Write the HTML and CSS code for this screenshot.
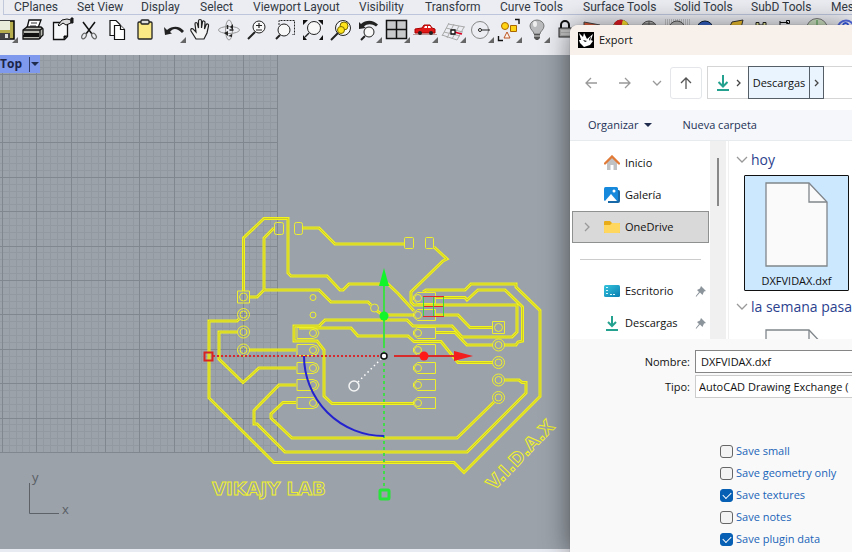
FILE: index.html
```html
<!DOCTYPE html>
<html lang="es">
<head>
<meta charset="utf-8">
<title>Export</title>
<link rel="stylesheet" href="styles.css">
</head>
<body>
<main class="app">
<nav class="tabs" aria-label="Toolbars">
<a href="#">CPlanes</a><a href="#">Set View</a><a href="#">Display</a><a href="#">Select</a><a href="#">Viewport Layout</a><a href="#">Visibility</a><a href="#">Transform</a><a href="#">Curve Tools</a><a href="#">Surface Tools</a><a href="#">Solid Tools</a><a href="#">SubD Tools</a><a href="#">Mesh Tools</a>
</nav>
<div class="tools" role="toolbar" aria-label="Standard">
<button aria-label="Save"><svg viewBox="0 0 28 28"><path d="M3 5h20v18H3z" fill="#b5ad4e" stroke="#000" stroke-width="1.5"/><path d="M6 5h13v9H6z" fill="#e8ecda"/><path d="M6 17h13v6H6z" fill="#444"/><path d="M14 18h3v4h-3z" fill="#ddd"/><path class="more" d="M27 21v6h-6z"/></svg></button>
<button aria-label="Print"><svg viewBox="0 0 28 28" stroke="#111" stroke-width="1.3"><path d="M8 12l2-8h12l-3 8z" fill="#fff"/><path d="M12 7h6m-7 3h6" stroke="#777"/><path d="M4 14l4-3h14l2 2v6l-4 4H4z" fill="#b9bbb3"/><path d="M4 14h17l3-2M21 14v9" fill="none"/><path d="M5 18h15M4 20h16" stroke-width="2"/></svg></button>
<button aria-label="Properties"><svg viewBox="0 0 28 28" stroke="#111"><path d="M6.500 6.500h14v14l-3 3h-11z" fill="#f7f8fa" stroke-width="1.300"/><path d="M20 20h-3v3"/><path d="M11 9l4-5 5-1 4 1v3l-5 2-3-2-4 3z" fill="#ddd"/><path d="M24 2h2v5h-2z" fill="#222"/></svg></button>
<button aria-label="Cut"><svg viewBox="0 0 28 28" fill="none" stroke="#111" stroke-width="1.500"><path d="M8 6l9 12M20 6l-9 12"/><g stroke="#666" stroke-width="1.200"><ellipse cx="9" cy="20" rx="2" ry="3" transform="rotate(35 9 20)"/><ellipse cx="19" cy="20" rx="2" ry="3" transform="rotate(-35 19 20)"/></g></svg></button>
<button aria-label="Copy"><svg viewBox="0 0 28 28" fill="#fff" stroke="#111" stroke-width="1.200"><path d="M7 4.500h6l4 4v11H7z"/><path d="M11.500 9.500h6l4 4v10h-10z"/><path d="M17.500 9.500v4h4"/></svg></button>
<button aria-label="Paste"><svg viewBox="0 0 28 28" stroke="#222" stroke-width="1.300"><rect x="7" y="6" width="14" height="17" rx="1" fill="#fbe985"/><rect x="10" y="4" width="8" height="4" rx="1" fill="#ddd"/></svg></button>
<button aria-label="Undo"><svg viewBox="0 0 28 28"><path d="M5 11l1 8 7-1.500-2-1.500c3-4 7-4 12 1l2-2c-4-5-11-6-17-1z" fill="#222"/><path class="more" d="M27 21v6h-6z"/></svg></button>
<button aria-label="Pan"><svg viewBox="0 0 28 28"><path d="M9 23l-5-8c-1-3 2-3 3-1l2 2-1-8c0-2 2-2 2.500 0l1 4V5c0-2 3-2 3 0v7l1-6c0-2 3-1 2.500 1l-.5 6 1.500-4c1-2 3-1 2.500 1l-1.500 7-3 6z" fill="#f4f4f5" stroke="#222" stroke-width="1.200"/></svg></button>
<button aria-label="Rotate view"><svg viewBox="0 0 28 28" fill="none" stroke="#999"><ellipse cx="14" cy="14" rx="10.500" ry="3.500"/><ellipse cx="14" cy="14" rx="3.500" ry="10"/><path d="M12.500 9v4m6 1h-4" stroke="#222" stroke-width="1.500"/><path d="M18 8v6l-3-3zM9 17l4-2v5zM13 20l4-2v3z" fill="#222" stroke="none"/></svg></button>
<button aria-label="Zoom"><svg viewBox="0 0 28 28" fill="none" stroke="#222"><circle cx="16" cy="11" r="6" fill="#f8f8f8"/><path d="M16 7v5m-3-2.500h6M13 14h6" stroke-width="1.200"/><path d="M12 16l-7 7" stroke-width="2"/></svg></button>
<button aria-label="Zoom window"><svg viewBox="0 0 28 28" fill="none" stroke="#222"><path d="M8 9V4.500h15.500v14H21" stroke-dasharray="2 1"/><circle cx="13" cy="14" r="6" fill="#f8f8f8"/><path d="M9 19l-4 4" stroke-width="2"/></svg></button>
<button aria-label="Zoom extents"><svg viewBox="0 0 28 28" fill="none" stroke="#222"><circle cx="15" cy="12" r="6.500" fill="#f8f8f8"/><path d="M10 17l-4 4" stroke-width="1.500"/><path d="M4 4h5l-5 5zM24 4h-5l5 5zM4 24h4l-4-5zM24 24h-4l4-5z" fill="#111" stroke="none"/></svg></button>
<button aria-label="Zoom selected"><svg viewBox="0 0 28 28" fill="none" stroke="#222"><circle cx="16" cy="12" r="7.500" fill="#f8f8f8"/><g fill="#ffe31b" stroke="#776a00"><circle cx="17" cy="10" r="4"/><circle cx="14" cy="14" r="3.500"/></g><path d="M11 17l-7 7" stroke-width="2"/></svg></button>
<button aria-label="Undo view"><svg viewBox="0 0 28 28" fill="none" stroke="#222"><path d="M4 6l0 7 7-1-2-1.500c3-3 8-3 12 0l2-2c-5-5-12-5-17-.500z" fill="#222" stroke="none"/><circle cx="14" cy="16" r="5" fill="#f8f8f8"/><path d="M10 20l-4 4" stroke-width="2"/><path class="more" stroke="none" d="M27 21v6h-6z"/></svg></button>
<button aria-label="Four viewports"><svg viewBox="0 0 28 28"><path d="M3.500 4.500h20v18h-20zM13.500 4.500v18M3.500 13.500h20" fill="#c8c9cb" stroke="#111" stroke-width="1.500"/><path class="more" d="M27 21v6h-6z"/></svg></button>
<button aria-label="Set view"><svg viewBox="0 0 28 28"><path d="M2 18.500h24" stroke="#b99"/><path d="M4 17v-4l7-1 2-3h6l2 3 3 1v4z" fill="#e01818" stroke="#a00"/><path d="M13 12l1-2h2v2zm4 0v-2h2l1 2z" fill="#fff"/><g fill="#222"><circle cx="9" cy="17" r="2"/><circle cx="20" cy="17" r="2"/></g><path class="more" d="M27 21v6h-6z"/></svg></button>
<button aria-label="Set CPlane"><svg viewBox="0 0 28 28"><path d="M9 8l17 3M7 12l17 4M5 16l16 4M3 19l15 5M10 7L3 20M15 8L8 22M20 10l-7 13M25 11l-7 13" stroke="#aaa" fill="none"/><path d="M15 16l8 2" stroke="#d02" stroke-width="1.500"/><path d="M12 14h4v4h-4z" fill="#fff" stroke="#111" stroke-width="1.300"/><path class="more" d="M27 21v6h-6z"/></svg></button>
<button aria-label="Circle"><svg viewBox="0 0 28 28" fill="none" stroke="#888"><circle cx="13" cy="14" r="8.500"/><path d="M14 14h9" stroke="#222"/><circle cx="13" cy="14" r="1.500" fill="#fff" stroke="#222"/><path class="more" stroke="none" d="M27 21v6h-6z"/></svg></button>
<button aria-label="Select"><svg viewBox="0 0 28 28" fill="none" stroke="#333"><g fill="#ffd414" stroke="#a60"><circle cx="10" cy="10" r="3.500"/><path d="M15.500 9.500h6v6h-6z"/></g><path d="M12 16l-3 6h6z" fill="#fff5ee" stroke="#b52"/><path d="M20 3.500h4V8M3.500 20v4.500H8" stroke="#111" stroke-width="1.400"/><path class="more" stroke="none" d="M27 21v6h-6z"/></svg></button>
<button aria-label="Show or hide"><svg viewBox="0 0 28 28"><path d="M11 18c0-3-4-4-4-8a7 6 0 0 1 14 0c0 4-4 5-4 8z" fill="#b9bbbd" stroke="#777"/><ellipse cx="12" cy="8" rx="2" ry="3" fill="#eee"/><path d="M11 18h6v4l-2 2h-2l-2-2z" fill="#555"/><path d="M11 20h6" stroke="#ddd"/><path class="more" d="M27 21v6h-6z"/></svg></button>
<button aria-label="Lock"><svg viewBox="0 0 28 28"><path d="M10 12V9a4 4 0 0 1 8 0v3" fill="none" stroke="#111" stroke-width="2"/><rect x="8" y="12" width="13" height="9" fill="#aaa" stroke="#222"/><path d="M10 15h9m-9 3h9" stroke="#ddd"/></svg></button>
<button aria-label="Layers"><svg viewBox="0 0 28 28"><path d="M5 6l16 3v5H5z" fill="#e05a36" stroke="#444"/></svg></button>
<button aria-label="Color"><svg viewBox="0 0 28 28"><circle cx="14" cy="12" r="8" fill="#f3ba23" stroke="#555"/><path d="M14 12L7 8a8 8 0 0 1 9-4z" fill="#e41b25"/><path d="M14 12l2-8a8 8 0 0 1 5 4z" fill="#ffe52d"/></svg></button>
<button aria-label="Render"><svg viewBox="0 0 28 28"><circle cx="14" cy="13" r="8" fill="#bbb" stroke="#555"/><path d="M8 8h12M14 5v12" stroke="#555"/></svg></button>
<button aria-label="Shade"><svg viewBox="0 0 28 28"><path d="M2 4h25M2 6h25M2 8h25" stroke="#999" stroke-dasharray="1 1"/><circle cx="14" cy="13" r="8" fill="#bbb" stroke="#555"/></svg></button>
<button aria-label="Rendered"><svg viewBox="0 0 28 28"><circle cx="14" cy="13" r="8" fill="#3261c9" stroke="#123"/></svg></button>
<button aria-label="Spotlight"><svg viewBox="0 0 28 28"><path d="M13 6l11-2-2 8H10z" fill="#f3c32d" stroke="#333"/></svg></button>
<button aria-label="Options"><svg viewBox="0 0 28 28" fill="#ee9" stroke="#222"><path d="M9 6.500h3v3H9zM16 6.500h3v3h-3zM12 9h4"/></svg></button>
<button aria-label="Dimension"><svg viewBox="0 0 28 28" fill="none" stroke="#111"><path d="M5 5v6M5 6.500h8M11.500 4.500h3v3h-3z"/></svg></button>
<button aria-label="Grasshopper"><svg viewBox="0 0 28 28"><circle cx="14" cy="13" r="10.500" fill="#cfe3c4" stroke="#777"/><path d="M14 4v6" stroke="#494"/></svg></button>
<button aria-label="Help"><svg viewBox="0 0 28 28"><circle cx="15" cy="13" r="8.500" fill="#eef" stroke="#5369df" stroke-width="2"/><path d="M12 9c1-3 5-2 5 0" fill="none" stroke="#35d" stroke-width="2"/></svg></button>
</div>
<section class="viewport" aria-label="Top viewport">
<svg class="drawing">
<defs>
<g id="pl"><path d="M297 -5.500h16l4 1.500 2 4-2 4-4 1.500h-16z"/><circle cx="313" cy="0" r="3.500"/></g>
<g id="pr"><path d="M435.500 -5.500h-18l-4 3.500v4l4 3.500h18z"/><circle cx="418" cy="0" r="3.500"/></g>
<g id="via"><circle r="6"/><circle r="3.500"/></g>
<g id="sq"><path d="M-6-6H6V6H-6z"/><circle r="4"/></g>
<path id="traces" d="M243.500 291V238L264 218.500H288V273l3 3h36l13 14h3l6-6h39l10 9.500 16 17.500M274 228l-10 10v52l-7 7h-8M264 290h55l12 12h37l3 3M377 311l6 4h31M303 228h16l16 16h69M434 247l13 12-4 2-32 31v10l3 3h103v27l-5 5h-50l-10-11h-39l-6-6h-82l-6 6h-25v15h23l7 9v46l8 7.500h81M299 328h52l7 8h50l6 5.500h27l17 21h35M436 297.500h29l2 2.500 11-10h27l17.500 17v34l-4.500 1-2 3h-12M423 292l3-2h39l6-6h45v3l24 23.500v86l-76 76-10-10H274l-65-64.500V321h28l2-2M237 332h-18v27l24 23.500 16-14.500h37M249 350h47M296 385h-17l-25 25.500V424h3l28 28h182l59-59v-10.500h-4l-3-2.500h-14M296 402.500h-13L271 414v4l21 20h165l37-36M436 315h22l12 12.500h22M436 332.500h19L467 345h25"/>
</defs>
<g transform="translate(0 -55)" fill="none">
<g id="grid" shape-rendering="crispEdges"></g>
<use href="#traces" class="trace"/><use href="#traces" class="core"/>
<g stroke="#eff02d" stroke-width="1">
<rect x="274.500" y="222.500" width="9" height="12" rx="2"/><rect x="294.500" y="222.500" width="8" height="12" rx="2"/><rect x="404.500" y="237.500" width="9" height="11" rx="1"/><rect x="425.500" y="237.500" width="8" height="11" rx="1"/>
<use href="#sq" x="243.500" y="297"/><use href="#via" x="243.500" y="314.500"/><use href="#via" x="243.500" y="332"/><use href="#via" x="243.500" y="350"/>
<circle cx="313" cy="297.500" r="3"/><circle cx="313" cy="315" r="3"/><circle cx="374.500" cy="308" r="4"/>
<use href="#pl" y="333"/><use href="#pl" y="350"/><use href="#pl" y="368"/><use href="#pl" y="385"/><use href="#pl" y="403"/>
<use href="#pr" y="298"/><use href="#pr" y="315"/><use href="#pr" y="333"/><use href="#pr" y="350"/><use href="#pr" y="368"/><use href="#pr" y="385"/><use href="#pr" y="403"/>
<use href="#sq" x="498.500" y="327.500"/><use href="#via" x="498.500" y="345"/><use href="#via" x="498.500" y="362.500"/><use href="#via" x="498.500" y="380"/><use href="#via" x="498.500" y="397.500"/>
<text class="board" x="212" y="495">VIKAJY LAB</text>
<text class="board" transform="translate(494 491) rotate(-46)">V.I.D.A.X</text>
</g>
<path d="M423 296.500h21M423 306.500h21M423 316.500h21" stroke="#e32a2a"/>
<path d="M423.500 297v19M433.500 297v19M443.500 297v19" stroke="#37d63d"/>
<path d="M213 356h168" stroke="#d62a2e" stroke-width="2" stroke-dasharray="2 2"/>
<path d="M384 286v59" stroke="#3fdc47" stroke-width="2"/><path d="M384 345v145" stroke="#3fdc47" stroke-width="2" stroke-dasharray="3 3"/>
<path d="M384 268l5 18h-10z" fill="#12f52b"/><circle cx="384" cy="316" r="4.500" fill="#12f52b"/>
<rect x="380" y="490" width="9" height="9" rx="1" stroke="#28e43a" stroke-width="3"/>
<path d="M394 356h61" stroke="#d72b2b" stroke-width="2"/><circle cx="424" cy="356" r="4.500" fill="#ff1a1a"/><path d="M454 351l19 5-19 5z" fill="#f31d1d"/>
<rect x="204.500" y="352.500" width="8" height="8" stroke="#d92522" stroke-width="2"/>
<path d="M304 356A80 80 0 0 0 384 436" stroke="#2422cf" stroke-width="2"/>
<path d="M358 382l24-24" stroke="#fff" stroke-width="1.500" stroke-dasharray="1.500 3"/><circle cx="354" cy="386" r="5" stroke="#f4f4f4" stroke-width="1.500"/>
<circle cx="384" cy="356" r="3" fill="#fff" stroke="#111" stroke-width="1.500"/>
<path d="M29.500 483v30.500H59" stroke="#5d6268"/>
<g class="axis"><text x="32" y="482">y</text><text x="62" y="514">x</text></g>
</g>
</svg>
<button class="viewname"><span>Top</span><i></i></button>
</section>
<div class="status"></div>
</main>

<section class="dialog" role="dialog" aria-label="Export">
<header class="title"><svg width="16" height="16"><path d="M0 0h16v16H0z" fill="#000"/><path d="M1 1l4 4 1-4 3 6 6-5-2 6 2 1-3 4-6 2-4-4-1-3 2 0z" fill="#fff"/><path d="M5 8l4 1-2 1zM11 7l2-3-1 5z" fill="#000"/></svg><h1>Export</h1></header>
<div class="nav">
<button class="plain" aria-label="Atrás"><svg width="14" height="14"><path d="M13 7H2M7 2L2 7l5 5" class="ln pale"/></svg></button>
<button class="plain" aria-label="Adelante"><svg width="14" height="14"><path d="M1 7h11M7 2l5 5-5 5" class="ln pale"/></svg></button>
<button class="plain small" aria-label="Recientes"><svg width="10" height="14"><path d="M1 5l4 4 4-4" class="ln pale"/></svg></button>
<button class="up" aria-label="Subir"><svg width="14" height="14"><path d="M7 13V2M2 7l5-5 5 5" class="ln"/></svg></button>
<div class="address"><svg width="14" height="18"><path d="M7 1v11M2.500 8L7 12.500 11.500 8M1 16h12" class="ln down"/></svg><svg width="6" height="10"><path d="M1 2l3 3-3 3" class="ln strong"/></svg><div class="crumb"><button>Descargas</button><button class="next" aria-label="Abrir"><svg width="6" height="10"><path d="M1 2l3 3-3 3" class="ln strong"/></svg></button></div></div>
</div>
<div class="commands"><button>Organizar<i></i></button><button>Nueva carpeta</button></div>
<div class="browser">
<nav class="side">
<a href="#"><svg width="16" height="16"><path d="M3 7l5-5 5 5v8H9.500v-5h-3v5H3z" fill="#bfc1c3"/><path d="M1 8.500l7-7 7 7" fill="none" stroke="#e07a36" stroke-width="2.300" stroke-linecap="round"/></svg>Inicio</a>
<a href="#"><svg width="16" height="16"><path d="M4 3h10.500q1.500 0 1.500 1.500V14q0 2-2 2H4z" fill="#1769a8"/><rect width="14" height="14" rx="1.500" fill="#1689dc"/><path d="M1 14l6-7 6 7z" fill="#fff"/><circle cx="10" cy="4" r="1.500" fill="#fff"/></svg>Galería</a>
<a href="#" class="on"><svg class="chev" width="6" height="10"><path d="M1 1l4 4-4 4" class="ln pale"/></svg><svg width="16" height="16"><path d="M0 3q0-1 1-1h5l2 2h7q1 0 1 1v8q0 1-1 1H1q-1 0-1-1z" fill="#e8ac18"/><path d="M0 6h6l2-2h7q1 0 1 1v8q0 1-1 1H1q-1 0-1-1z" fill="#ffd75f"/></svg>OneDrive</a>
<hr>
<a href="#"><svg width="16" height="16"><defs><linearGradient id="dk" x2="1" y2="1"><stop stop-color="#36c4dd"/><stop offset="1" stop-color="#087db1"/></linearGradient></defs><rect y="2" width="16" height="12" rx="1.500" fill="url(#dk)"/><path d="M2 4h2v1H2zM2 7h2v1H2zM2 10h2v1H2zM6 11h2v1H6zM9 11h2v1H9z" fill="#d8f7ff"/></svg>Escritorio<svg class="pin" width="10" height="12"><path d="M5 1l5 5-2 .5L6.500 10 4 7.500 0 12l-.2-1L3 7 1 5l3-1.500z" fill="#8b939b"/></svg></a>
<a href="#"><svg width="16" height="16"><path d="M8 1v10M4 7l4 4 4-4M2 15h12" class="ln down"/></svg>Descargas<svg class="pin" width="10" height="12"><path d="M5 1l5 5-2 .5L6.500 10 4 7.500 0 12l-.2-1L3 7 1 5l3-1.500z" fill="#8b939b"/></svg></a>
</nav>
<div class="scroll"><i></i></div>
<div class="files">
<h2><svg width="12" height="8"><path d="M1 1l5 5 5-5" class="ln pale"/></svg>hoy</h2>
<button class="file"><svg width="64" height="85"><path d="M1 1h43l18 19v64H1z" class="page"/><path d="M44 1v19h18" class="fold"/></svg>DXFVIDAX.dxf</button>
<h2><svg width="12" height="8"><path d="M1 1l5 5 5-5" class="ln pale"/></svg>la semana pasada</h2>
<button class="file other" aria-label="Archivo"><svg width="64" height="85"><path d="M1 1h43l18 19v64H1z" class="page"/><path d="M44 1v19h18" class="fold"/></svg></button>
</div>
</div>
<form>
<div class="row"><label for="fn">Nombre:</label><input id="fn" value="DXFVIDAX.dxf"></div>
<div class="row"><label for="ft">Tipo:</label><select id="ft"><option>AutoCAD Drawing Exchange (*.dxf)</option></select></div>
<div class="checks">
<label><input type="checkbox">Save small</label>
<label><input type="checkbox">Save geometry only</label>
<label><input type="checkbox" checked>Save textures</label>
<label><input type="checkbox">Save notes</label>
<label><input type="checkbox" checked>Save plugin data</label>
</div>
</form>
</section>
<script src="grid.js"></script>
</body>
</html>
```

FILE: grid.js
```js
// Construction plane grid: five minor cells per major cell, ending at the right and bottom edges.
const step = 34.4 / 5, right = 277, bottom = 452;
let minor = '', major = '';
for (let i = 0; i < 60; i++) {
  const x = Math.round(right - i * step) + 0.5;
  const y = Math.round(bottom - i * step) + 0.5;
  let d = '';
  if (x > 0) d += `M${x} 55V${bottom + 1}`;
  if (y > 55) d += `M0 ${y}H${right + 1}`;
  if (i % 5) minor += d; else major += d;
}
document.getElementById('grid').innerHTML =
  `<path d="${minor}" stroke="#9299a1"/><path d="${major}" stroke="#80878e"/>`;
```

FILE: styles.css
```css
* { box-sizing: border-box; }
body { margin: 0; min-height: 100vh; position: relative; overflow: hidden; background: #ebedf3; font: 12px/16px "Open Sans", "Noto Sans", sans-serif; color: #111; }
button { font: inherit; color: inherit; border: 0; background: none; padding: 0; margin: 0; }
a { color: inherit; text-decoration: none; }
svg { flex: none; display: block; }
.app { display: flex; flex-direction: column; height: 100vh; overflow: hidden; }
.tabs { flex: none; display: grid; grid-template-columns: 63px 64px 59px 53px 106px 66px 75px 83px 91px 77px 80px 80px; height: 15px; margin-left: 3px; padding-left: 10px; border-left: 1px solid #c1c8dc; border-bottom: 1px solid #bcc5dc; white-space: nowrap; line-height: 14px; color: #333943; font-family: Roboto, "Open Sans", sans-serif; }
.tools { flex: none; display: flex; height: 40px; padding-top: 1px; margin-left: -9px; }
.tools button { flex: none; width: 28px; height: 28px; }
.tools svg { width: 28px; height: 28px; }
.more { fill: #666; }
.viewport { flex: 1; min-height: 0; position: relative; overflow: hidden; background: #9ba2aa; }
.drawing { width: 100%; height: 100%; }
.trace { stroke: #f2f21c; stroke-width: 3; }
.core { stroke: #c9c92c; stroke-width: 1; }
.board { font: bold 18px "DejaVu Sans", sans-serif; }
.axis { fill: #595e64; font-size: 13px; }
.viewname { position: absolute; left: 0; top: 0; display: flex; align-items: center; width: 40px; height: 18px; background: #7f99ec; font-weight: bold; color: #1b2447; }
.viewname span { flex: 1; text-align: left; }
.viewname i { height: 15px; width: 11px; border-left: 1px solid #333c63; display: grid; place-items: center; }
.viewname i::after, .commands i { content: ""; border: 4px solid transparent; border-top-color: #1f2c4d; border-bottom: 0; }
.status { flex: none; height: 3px; background: #e9ebf2; }
.dialog { position: absolute; left: 570px; right: 0; top: 25px; bottom: 0; display: flex; flex-direction: column; overflow: hidden; border-radius: 8px 0 0 0; background: #f9f9f9; box-shadow: 0 2px 28px #0008, 0 0 1px #777; font-size: 11px; }
.title { flex: none; display: flex; align-items: center; gap: 5px; height: 30px; padding-left: 8px; background: #f8f1eb; }
h1 { margin: 0; font: inherit; }
.nav { flex: none; display: flex; align-items: center; height: 55px; padding-left: 14px; background: #fff; }
.plain { display: grid; place-items: center; width: 14px; height: 32px; margin-right: 20px; }
.small { width: 10px; margin-right: 8px; }
.ln { fill: none; stroke: #555; stroke-width: 1.3; }
.pale { stroke: #999; }
.strong { stroke: #444; }
.down { stroke: #25a28f; stroke-width: 2; }
.up { display: grid; place-items: center; width: 32px; height: 32px; border: 1px solid #e4e6ea; border-radius: 3px; margin-right: 5px; }
.address { flex: 1; display: flex; align-items: center; height: 33px; border: 1px solid #d5d5d5; border-right: 0; padding-left: 8px; gap: 6px; }
.crumb { display: flex; height: 33px; border: 1px solid #555d66; background: #e9f4fe; }
.crumb button { width: 60px; text-align: center; }
.crumb .next { width: 14px; display: grid; place-items: center; border-left: 1px solid #555d66; }
.commands { flex: none; display: flex; align-items: center; gap: 30px; height: 31px; padding-left: 18px; background: #f5f7fa; border-bottom: 1px solid #e8ebee; color: #243256; }
.commands button { display: flex; align-items: center; gap: 6px; white-space: nowrap; }
.browser { flex: none; display: flex; height: 198px; background: #fff; overflow: hidden; }
.side { flex: none; width: 140px; padding: 6px 1px 0 2px; }
.side a { display: flex; align-items: center; gap: 5px; height: 32px; padding-left: 32px; position: relative; }
.side .on { background: #d9d9d9; border: 1px solid #8e918f; padding-left: 31px; }
.chev { position: absolute; left: 11px; }
.pin { position: absolute; right: 3px; overflow: visible; }
.side hr { height: 1px; border: 0; margin: 16px 8px 15px; background: #ccc; }
.scroll { flex: none; width: 16px; background: #f0f0f0; padding: 17px 7px 0; }
.scroll i { display: block; width: 2px; height: 48px; background: #888; }
.files { flex: 1; min-width: 0; margin-left: 2px; border-left: 1px solid #f0f0f0; padding: 8px 0 0 7px; overflow: hidden; }
.files h2 { display: flex; align-items: center; gap: 3px; margin: 0; font-size: 14px; font-weight: normal; line-height: 22px; color: #2b3f8e; white-space: nowrap; }
.file { display: flex; flex-direction: column; align-items: center; gap: 6px; width: 105px; height: 116px; margin: 4px 0 5px 8px; padding-top: 6px; background: #cce8ff; border: 1px solid #111; border-radius: 1px; }
.other { background: none; border-color: transparent; }
.page { fill: #fafafa; stroke: #80868b; stroke-width: 1.3; }
.fold { fill: none; stroke: #80868b; stroke-width: 1.3; }
form { flex: 1; padding-top: 11px; }
.row { display: flex; gap: 5px; height: 23px; margin-bottom: 2px; }
.row label { width: 120px; text-align: right; line-height: 23px; }
.row input, .row select { flex: 1; min-width: 0; height: 23px; font: inherit; color: #111; background: #fff; border: 1px solid #868686; border-right: 0; border-radius: 0; padding: 0 5px; appearance: none; outline: 0; }
.row select { border-color: #ccc; padding: 0 3px; white-space: nowrap; }
.checks { display: flex; flex-direction: column; padding: 40px 0 0 150px; color: #1a64b8; }
.checks label { display: flex; align-items: center; gap: 3px; height: 22px; }
.checks input { appearance: none; width: 13px; height: 13px; margin: 0; border: 1px solid #666; border-radius: 3px; background: #f3f3f3; display: grid; place-items: center; }
.checks input:checked { background: #0860b5; border-color: #0860b5; }
.checks input:checked::after { content: ""; width: 7px; height: 4px; border: solid #fff; border-width: 0 0 1px 1px; transform: translateY(-1px) rotate(-45deg); }
```
